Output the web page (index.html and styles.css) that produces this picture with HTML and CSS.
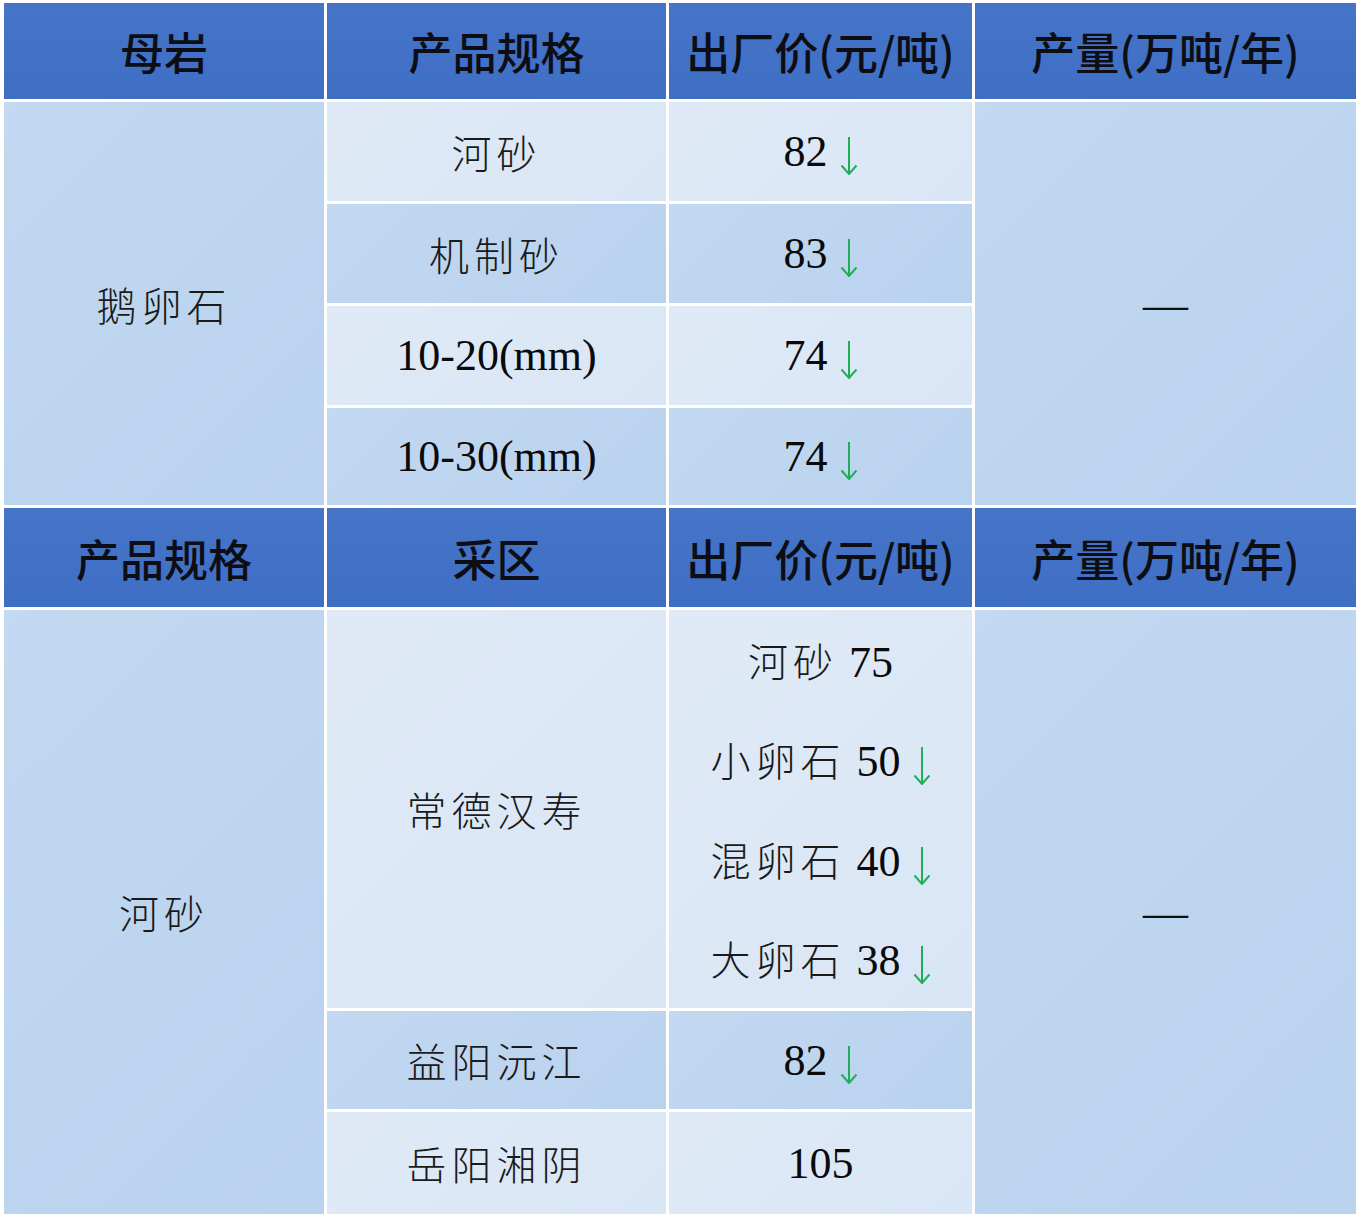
FILE: index.html
```html
<!DOCTYPE html>
<html lang="zh-CN">
<head>
<meta charset="utf-8">
<title>价格表</title>
<link rel="stylesheet" href="styles.css">
</head>
<body>
<div class="table">
  <div class="cell h">母岩</div>
  <div class="cell h">产品规格</div>
  <div class="cell h">出厂价(元/吨)</div>
  <div class="cell h">产量(万吨/年)</div>

  <div class="cell m span4"><span class="zh">鹅卵石</span></div>
  <div class="cell l"><span class="zh">河砂</span></div>
  <div class="cell l"><span class="t"><span class="num">82</span><svg class="down" viewBox="0 0 18 38" width="18" height="38"><path d="M9 0V36M1.5 28.5L9 37L16.5 28.5"/></svg></span></div>
  <div class="cell m span4 dash">—</div>

  <div class="cell m"><span class="zh">机制砂</span></div>
  <div class="cell m"><span class="t"><span class="num">83</span><svg class="down" viewBox="0 0 18 38" width="18" height="38"><path d="M9 0V36M1.5 28.5L9 37L16.5 28.5"/></svg></span></div>

  <div class="cell l"><span class="num">10-20(mm)</span></div>
  <div class="cell l"><span class="t"><span class="num">74</span><svg class="down" viewBox="0 0 18 38" width="18" height="38"><path d="M9 0V36M1.5 28.5L9 37L16.5 28.5"/></svg></span></div>

  <div class="cell m"><span class="num">10-30(mm)</span></div>
  <div class="cell m"><span class="t"><span class="num">74</span><svg class="down" viewBox="0 0 18 38" width="18" height="38"><path d="M9 0V36M1.5 28.5L9 37L16.5 28.5"/></svg></span></div>

  <div class="cell h">产品规格</div>
  <div class="cell h">采区</div>
  <div class="cell h">出厂价(元/吨)</div>
  <div class="cell h">产量(万吨/年)</div>

  <div class="cell m span3"><span class="zh">河砂</span></div>
  <div class="cell l"><span class="zh">常德汉寿</span></div>
  <div class="cell l stack">
    <div class="line"><span class="t"><span class="zh">河砂</span> <span class="num">75</span></span></div>
    <div class="line"><span class="t"><span class="zh">小卵石</span> <span class="num">50</span><svg class="down" viewBox="0 0 18 38" width="18" height="38"><path d="M9 0V36M1.5 28.5L9 37L16.5 28.5"/></svg></span></div>
    <div class="line"><span class="t"><span class="zh">混卵石</span> <span class="num">40</span><svg class="down" viewBox="0 0 18 38" width="18" height="38"><path d="M9 0V36M1.5 28.5L9 37L16.5 28.5"/></svg></span></div>
    <div class="line"><span class="t"><span class="zh">大卵石</span> <span class="num">38</span><svg class="down" viewBox="0 0 18 38" width="18" height="38"><path d="M9 0V36M1.5 28.5L9 37L16.5 28.5"/></svg></span></div>
  </div>
  <div class="cell m span3 dash">—</div>

  <div class="cell m"><span class="zh">益阳沅江</span></div>
  <div class="cell m"><span class="t"><span class="num">82</span><svg class="down" viewBox="0 0 18 38" width="18" height="38"><path d="M9 0V36M1.5 28.5L9 37L16.5 28.5"/></svg></span></div>

  <div class="cell l"><span class="zh">岳阳湘阴</span></div>
  <div class="cell l"><span class="num">105</span></div>
</div>
</body>
</html>
```

FILE: styles.css
```css
html, body {
  margin: 0;
  padding: 0;
  background: #ffffff;
}

body {
  width: 1356px;
  height: 1214px;
  overflow: hidden;
}

.table {
  display: grid;
  grid-template-columns: 320px 339px 303px 1fr;
  grid-template-rows: 96px 99px 99px 99px 97px 99px 398px 98px 102px;
  gap: 3px;
  padding: 3px 0 0 4px;
  width: 1352px;
  font-family: "Liberation Serif", "Noto Sans CJK SC", serif;
  font-size: 44px;
  color: #111111;
}

.cell {
  display: flex;
  align-items: center;
  justify-content: center;
  white-space: nowrap;
}

.h {
  background: linear-gradient(180deg, #4574c8 0%, #3f6fc5 100%);
  font-family: "Noto Sans CJK SC", sans-serif;
  font-weight: 500;
  font-size: 44px;
  color: #0d0d14;
}

.l {
  background: linear-gradient(135deg, #e0eaf7 0%, #d9e6f5 100%);
}

.m {
  background: linear-gradient(135deg, #c3d8f1 0%, #b9d2ee 100%);
}

.span4 {
  grid-row: span 4;
}

.span3 {
  grid-row: span 3;
}

.t {
  white-space: pre;
}

.num {
  font-family: "Liberation Serif", serif;
  font-size: 44px;
  color: #0a0a0a;
}

.zh {
  font-family: "Noto Sans CJK SC", sans-serif;
  font-size: 40px;
  font-weight: 300;
  letter-spacing: 5px;
  color: #1a1a1a;
}

.dash {
  font-family: "Liberation Serif", serif;
  font-size: 45px;
}

.down {
  margin-left: 12px;
  vertical-align: -9px;
  fill: none;
  stroke: #1fae55;
  stroke-width: 2;
}

.stack {
  flex-direction: column;
  align-items: stretch;
}

.line {
  flex: 1;
  display: flex;
  align-items: center;
  justify-content: center;
}
```
